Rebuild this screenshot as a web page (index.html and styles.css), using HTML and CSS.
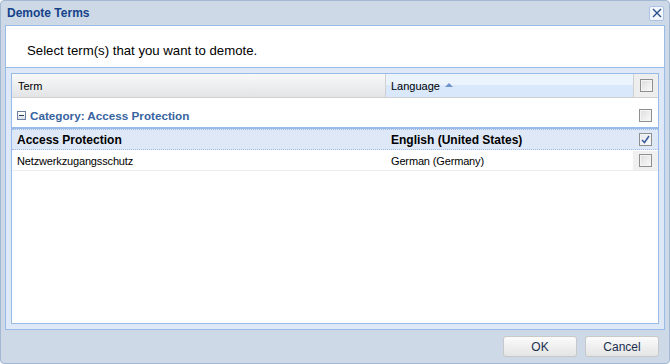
FILE: index.html
```html
<!DOCTYPE html>
<html lang="en">
<head>
    <meta charset="UTF-8">
    <title>Demote Terms</title>
    <link rel="stylesheet" href="styles.css">
</head>
<body>
    <div class="window">
        <div class="titlebar">
            <span class="title">Demote Terms</span>
            <span class="close-btn">
                <svg width="10" height="10" viewBox="0 0 10 10"><path d="M1 1 L9 9 M9 1 L1 9" stroke="#2a4f8f" stroke-width="1.4" fill="none"/></svg>
            </span>
        </div>

        <div class="panel">
            <div class="message">Select term(s) that you want to demote.</div>

            <div class="grid-wrap">
                <div class="grid">
                    <div class="grid-header">
                        <div class="col-term hd">Term</div>
                        <div class="col-lang hd sorted">Language <span class="sort-arrow"></span></div>
                        <div class="col-check hd"><span class="checkbox"></span></div>
                    </div>

                    <div class="group-row">
                        <div class="group-title">
                            <span class="collapse-icon"></span>
                            Category: Access Protection
                        </div>
                        <div class="col-check"><span class="checkbox"></span></div>
                    </div>

                    <div class="row selected">
                        <div class="col-term">Access Protection</div>
                        <div class="col-lang">English (United States)</div>
                        <div class="col-check"><span class="checkbox checked">
                            <svg width="9" height="9" viewBox="0 0 9 9"><path d="M1 5 L3.5 7.5 L8 1" stroke="#3b5a9a" stroke-width="1.5" fill="none"/></svg>
                        </span></div>
                    </div>

                    <div class="row">
                        <div class="col-term">Netzwerkzugangsschutz</div>
                        <div class="col-lang">German (Germany)</div>
                        <div class="col-check grey"><span class="checkbox"></span></div>
                    </div>
                </div>
            </div>
        </div>

        <div class="footer">
            <button class="btn">OK</button>
            <button class="btn">Cancel</button>
        </div>
    </div>
</body>
</html>
```

FILE: styles.css
```css
* { margin: 0; padding: 0; box-sizing: border-box; }
body { font-family: "Liberation Sans", Arial, sans-serif; font-size: 11px; background: #fff; }
.window { width: 670px; height: 364px; background: #cdd9e6; border: 1px solid #a3b8d3; border-radius: 4px; display: flex; flex-direction: column; padding: 0 4px; }
.titlebar { height: 24px; display: flex; align-items: center; justify-content: space-between; padding-left: 2px; }
.title { color: #15428b; font-weight: bold; font-size: 12px; }
.close-btn { width: 15px; height: 15px; border: 1px solid #a9c2e6; border-radius: 2px; background: #f3f7fc; display: flex; align-items: center; justify-content: center; margin-right: 1px; }
.panel { border: 1px solid #99bbe8; background: #dfe8f6; height: 305px; display: flex; flex-direction: column; }
.message { background: #fff; height: 42px; border-bottom: 1px solid #99bbe8; font-size: 13.2px; color: #000; padding: 17px 0 0 21px; }
.grid-wrap { flex: 1; padding: 5px 5px 5px 5px; }
.grid { height: 100%; background: #fff; border: 1px solid #99bbe8; }
.grid-header { display: flex; height: 24px; border-bottom: 1px solid #d0d0d0; background: linear-gradient(#f9f9f9, #e3e4e6); }
.col-term { width: 374px; padding-left: 6px; display: flex; align-items: center; }
.col-lang { width: 247px; padding-left: 5px; display: flex; align-items: center; }
.col-check { width: 25px; display: flex; align-items: center; justify-content: center; }
.hd { border-right: 1px solid #d0d0d0; color: #000; }
.hd.col-check { border-right: none; border-left: 1px solid #d0d0d0; background: #eeeeee; }
.hd.col-lang { border-right: none; }
.sorted { background: linear-gradient(#ebf3fd 0, #ebf3fd 45%, #d9e8fb 50%, #d9e8fb 100%); }
.sort-arrow { display: inline-block; width: 0; height: 0; border-left: 4px solid transparent; border-right: 4px solid transparent; border-bottom: 4px solid #6f93cc; margin-left: 5px; margin-bottom: 2px; }
.group-row { display: flex; height: 31px; border-bottom: 2px solid #99bbe8; }
.group-title { flex: 1; display: flex; align-items: center; padding-left: 5px; padding-top: 5px; color: #3764a0; font-weight: bold; font-size: 11.7px; }
.group-row .col-check { padding-top: 5px; }
.collapse-icon { width: 9px; height: 9px; border: 1px solid #6b7fa0; background: linear-gradient(#fff, #d9e0ea); position: relative; margin-right: 4px; }
.collapse-icon::after { content: ""; position: absolute; left: 1px; top: 3px; width: 5px; height: 1px; background: #2c3e5c; }
.row { display: flex; height: 21px; border-top: 1px dotted #fff; border-bottom: 1px solid #ededed; letter-spacing: -0.15px; }
.row.selected { background: #dfe8f6; border-top: 1px dotted #a3bae9; border-bottom: 1px dotted #a3bae9; font-weight: bold; font-size: 12px; letter-spacing: 0; }
.row .col-term { padding-left: 5px; }
.col-check.grey { background: #f0f0f0; }
.checkbox { width: 13px; height: 13px; border: 1px solid #8e8f8f; background: linear-gradient(135deg, #dcdcdc, #fbfbfb); box-shadow: inset 0 0 0 1px #f4f4f4; display: flex; align-items: center; justify-content: center; }
.checkbox.checked { background: linear-gradient(135deg, #e2e8f1, #fbfbfb); }
.footer { flex: 1; display: flex; justify-content: flex-end; align-items: flex-start; padding-top: 6px; gap: 8px; padding-right: 6px; }
.btn { width: 74px; height: 21px; border: 1px solid #c8c8c8; border-radius: 3px; background: linear-gradient(#fbfbfb, #e4e4e4); font-family: "Liberation Sans", Arial, sans-serif; font-size: 12px; color: #1a2f4e; }
```
